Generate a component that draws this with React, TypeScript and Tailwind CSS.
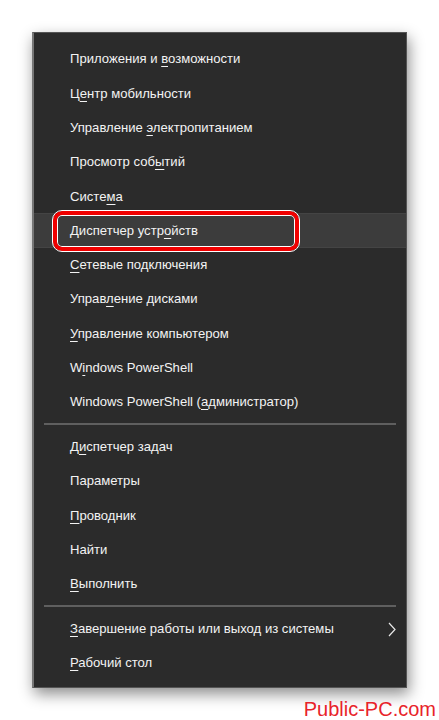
import React from 'react'

type Item = { pre: string; key: string; post: string; sub?: boolean; active?: boolean }

const groupA: Item[] = [
  { pre: 'Приложения и ', key: 'в', post: 'озможности' },
  { pre: 'Ц', key: 'е', post: 'нтр мобильности' },
  { pre: 'Управление ', key: 'э', post: 'лектропитанием' },
  { pre: 'Просмотр соб', key: 'ы', post: 'тий' },
  { pre: 'Систе', key: 'м', post: 'а' },
  { pre: 'Диспетчер устр', key: 'о', post: 'йств', active: true },
  { pre: '', key: 'С', post: 'етевые подключения' },
  { pre: 'Управ', key: 'л', post: 'ение дисками' },
  { pre: '', key: 'У', post: 'правление компьютером' },
  { pre: 'W', key: 'i', post: 'ndows PowerShell' },
  { pre: 'Windows PowerShell (', key: 'а', post: 'дминистратор)' },
]

const groupB: Item[] = [
  { pre: 'Д', key: 'и', post: 'спетчер задач' },
  { pre: 'Параметры', key: '', post: '' },
  { pre: '', key: 'П', post: 'роводник' },
  { pre: 'Найти', key: '', post: '' },
  { pre: '', key: 'В', post: 'ыполнить' },
]

const groupC: Item[] = [
  { pre: '', key: 'З', post: 'авершение работы или выход из системы', sub: true },
  { pre: '', key: 'Р', post: 'абочий стол' },
]

function Row({ item }: { item: Item }) {
  return (
    <div className={`relative flex items-center h-[34.3px] pl-[36px] pr-4 ${item.active ? 'bg-[#3c3c3c] border-y border-[#444]' : ''}`}>
      {item.active && (
        <div className="absolute left-[19px] top-[-3px] w-[246px] h-[40px] rounded-[9px] border-[4px] border-[#f00000] outline outline-1 outline-white shadow-[inset_0_0_0_1px_#ffffff]" />
      )}
      <span className="text-[13.1px] text-[#f3f3f3] whitespace-nowrap">
        {item.pre}
        {item.key && <span className="underline underline-offset-[3px] decoration-1">{item.key}</span>}
        {item.post}
      </span>
      {item.sub && (
        <svg className="absolute right-[10px] top-[10px]" width="8" height="15" viewBox="0 0 8 15">
          <path d="M1 1 L7 7.5 L1 14" fill="none" stroke="#e8e8e8" strokeWidth="1.2" />
        </svg>
      )}
    </div>
  )
}

function Sep() {
  return (
    <div className="h-[10.4px] flex items-center px-[10px]">
      <div className="w-full h-[2px] bg-[#5f5f5f]" />
    </div>
  )
}

export default function App() {
  return (
    <div className="relative w-[439px] h-[720px] bg-white overflow-hidden" style={{ fontFamily: '"Liberation Sans", Arial, sans-serif' }}>
      <div className="pt-[32px] pl-[32px]">
        <div className="w-[375px] h-[656px] bg-[#2b2b2b] border border-[#555] border-l-2 border-l-[#777] pt-[9px] shadow-[2px_6px_14px_rgba(0,0,0,0.45)]">
          {groupA.map((it, i) => <Row key={'a' + i} item={it} />)}
          <Sep />
          {groupB.map((it, i) => <Row key={'b' + i} item={it} />)}
          <Sep />
          {groupC.map((it, i) => <Row key={'c' + i} item={it} />)}
        </div>
      </div>
      <div className="absolute right-[3px] bottom-[1px] text-[20px] leading-none text-[#e8232a]">
        Public-PC.com
      </div>
    </div>
  )
}
